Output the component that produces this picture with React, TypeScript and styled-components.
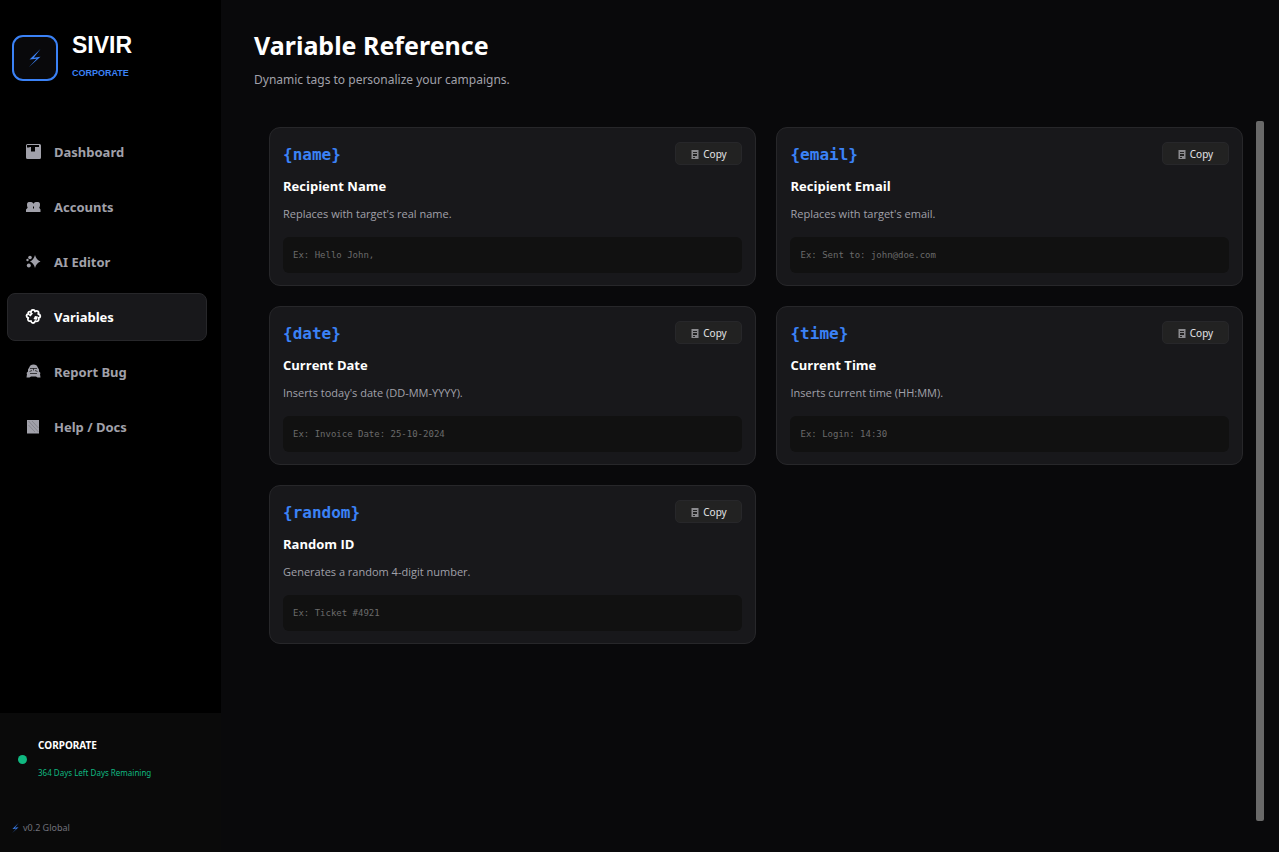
import React from 'react';
import styled, { createGlobalStyle, css } from 'styled-components';

const sans = '"Noto Sans", "Open Sans", sans-serif';
const bodySans = '"Open Sans", "Noto Sans", sans-serif';
const mono = '"DejaVu Sans Mono", "Liberation Mono", monospace';

const GlobalStyle = createGlobalStyle`
  *, *::before, *::after { box-sizing: border-box; }
  body { margin: 0; background: #09090b; color: #fff; font-family: ${sans}; }
  h1, h2, p { margin: 0; padding: 0; }
  button { font-family: inherit; cursor: pointer; }
`;

const Shell = styled.div`
  display: flex;
  min-height: 100vh;
`;

const Sidebar = styled.aside`
  flex: 0 0 221px;
  display: flex;
  flex-direction: column;
  background: #000;
`;

const Brand = styled.div`
  display: flex;
  gap: 14px;
  padding: 32px 12px 0;
`;

const LogoBox = styled.div`
  display: flex;
  align-items: center;
  justify-content: center;
  width: 46px;
  height: 46px;
  margin-top: 3px;
  border: 2px solid #3b82f6;
  border-radius: 11px;
  background: #09090b;
  color: #3b82f6;
`;

const BrandText = styled.div`
  font-family: "Liberation Sans", Arial, sans-serif;
`;

const BrandName = styled.div`
  font-size: 23px;
  font-weight: 700;
  line-height: 26px;
`;

const BrandPlan = styled.div`
  margin-top: 8px;
  color: #3b82f6;
  font-size: 9px;
  font-weight: 700;
  line-height: 14px;
`;

const Nav = styled.nav`
  display: flex;
  flex-direction: column;
  gap: 7px;
  padding: 47px 14px 0 7px;
`;

const NavButton = styled.button<{ $active?: boolean }>`
  display: flex;
  align-items: center;
  gap: 11px;
  height: 48px;
  padding: 0 16px 1px;
  border: 1px solid transparent;
  border-radius: 8px;
  background: transparent;
  color: #a1a1aa;
  font-size: 13px;
  font-weight: 700;
  line-height: 20px;
  ${({ $active }) =>
    $active &&
    css`
      border-color: #27272a;
      background: #18181b;
      color: #fff;
    `}
`;

const SidebarFooter = styled.footer`
  margin-top: auto;
  padding: 23px 12px 16px;
  background: #0a0a0a;
`;

const Status = styled.div`
  display: flex;
  align-items: center;
  gap: 11px;
  padding-left: 6px;
`;

const StatusDot = styled.span`
  width: 9px;
  height: 9px;
  border-radius: 50%;
  background: #10b981;
`;

const PlanName = styled.div`
  font-size: 10px;
  font-weight: 700;
  line-height: 18px;
`;

const PlanDays = styled.div`
  margin-top: 10px;
  color: #10b981;
  font-size: 8px;
  line-height: 18px;
`;

const Version = styled.div`
  display: flex;
  align-items: center;
  gap: 4px;
  margin-top: 38px;
  color: #71717a;
  font-size: 9px;
  line-height: 16px;
  svg { color: #3b82f6; }
`;

const Main = styled.main`
  flex: 1;
  min-width: 0;
  display: flex;
  flex-direction: column;
  padding: 28px 15px 31px 33px;
`;

const PageTitle = styled.h1`
  font-size: 25px;
  font-weight: 700;
  line-height: 35px;
`;

const PageSubtitle = styled.p`
  margin-top: 7px;
  color: #a1a1aa;
  font-size: 12px;
  line-height: 20px;
`;

const ScrollArea = styled.div`
  flex: 1;
  display: flex;
  gap: 13px;
  margin-top: 31px;
`;

const Grid = styled.div`
  flex: 1;
  display: grid;
  grid-template-columns: 488fr 467fr;
  align-content: start;
  gap: 20px;
  padding: 6px 0 0 15px;
`;

const ScrollThumb = styled.div`
  width: 8px;
  border-radius: 2px;
  background: #696969;
`;

const Card = styled.article`
  padding: 14px 13px 12px;
  border: 1px solid #27272a;
  border-radius: 11px;
  background: #18181b;
`;

const CardHeader = styled.div`
  display: flex;
  align-items: flex-start;
  justify-content: space-between;
  height: 23px;
`;

const Tag = styled.code`
  color: #3b82f6;
  font-family: ${mono};
  font-size: 16px;
  font-weight: 700;
  line-height: 25px;
`;

const CopyButton = styled.button`
  display: flex;
  align-items: center;
  justify-content: center;
  gap: 4px;
  width: 67px;
  height: 23px;
  padding: 0;
  border: 1px solid #27272a;
  border-radius: 5px;
  background: #222;
  color: #e4e4e7;
  font-size: 10px;
  line-height: 20px;
  svg { margin-top: 2px; }
`;

const CardTitle = styled.h2`
  margin-top: 11px;
  font-family: ${bodySans};
  font-size: 13px;
  font-weight: 700;
  line-height: 20px;
`;

const CardText = styled.p`
  margin-top: 9px;
  color: #a1a1aa;
  font-family: ${bodySans};
  font-size: 11px;
  line-height: 18px;
`;

const Example = styled.div`
  margin-top: 14px;
  padding: 0 10px;
  border-radius: 6px;
  background: #111;
  color: #6b6b6b;
  font-family: ${mono};
  font-size: 9px;
  line-height: 36px;
`;

const Bolt = ({ width, height }: { width: number; height: number }) => (
  <svg width={width} height={height} viewBox="0 0 12 18" fill="currentColor" aria-hidden="true">
    <path d="M11.500 0 .5 10.600l7.200-.9L0 18 11.500 7.800l-6.800.9Z" />
  </svg>
);

const icons = {
  dashboard: (
    <path
      fillRule="evenodd"
      d="M3.500 1h12A1.500 1.500 0 0 1 17 2.500v12a1.500 1.500 0 0 1-1.500 1.500h-12A1.500 1.500 0 0 1 2 14.500v-12A1.500 1.500 0 0 1 3.500 1ZM3 2v2.500h2.500V4H7v4.500h4V4h4V2Z"
    />
  ),
  accounts: (
    <path
      fillRule="evenodd"
      d="M3 6.500C3 4.500 4 4 6 4s3 .5 3.200 1.500h.6C10 4.500 11 4 13 4s3 .5 3 2.500c0 1.500-.3 2.500-.8 3.300L16.500 11.500V14H2v-2.500l1.700-1.700C3.300 9 3 8 3 6.500ZM9 8.500v2h1v-2Z"
    />
  ),
  sparkles: (
    <>
      <path d="M11 2q1.200 4.800 5.500 6.500-4.300 1.700-5.500 6.500-1.200-4.800-5-6.500 3.800-1.700 5-6.500Z" />
      <circle cx="6" cy="4.500" r="1.800" />
      <circle cx="3.500" cy="7" r="1.200" />
      <circle cx="4.800" cy="12.500" r="2" />
    </>
  ),
  puzzle: (
    <>
      <g fill="none" stroke="currentColor" strokeWidth="1.800" strokeLinejoin="round">
        <path d="M7 4.200C7 1.500 10.500 1 11 3.500c2-1.500 4.500 0 3.200 2.500 2.800.5 2.800 3.500.3 4 1 2.500-1 4-3.200 3-.8 2.800-4 2.500-4.300 0-2.500.8-4-1-2.700-3.200C1.700 9 2 6.200 4.500 6 3.500 4 5 3 7 4.200Z" />
      </g>
      <path d="m4.500 7 3-2.500 1.500 1-2.500 3ZM9.500 11l1.500-3 3 .5-1.500 3.500Z" />
    </>
  ),
  bug: (
    <>
      <path d="M5.500 4Q6 1.500 9.500 1.500T13.500 4L15 6.500v2L16.500 10l-.5 1 .5 3.500h-3L12 13.500H7l-1.500 1h-3L3 11l-.5-1L4 8.500v-2Z" />
      <path
        d="M6 5.500h7M5.500 8.500 8 7.500M13.500 8.500 11 7.500M6 10.500h7M9.500 5.500v2"
        fill="none"
        stroke="#000"
        strokeWidth="1"
        strokeOpacity=".65"
      />
    </>
  ),
  book: (
    <>
      <path d="M3 2h12v13.500H3z" />
      <path d="m4.500 3 10 11M8 3l6.500 7M4.500 7l6.500 7" stroke="#000" strokeOpacity=".25" strokeWidth=".7" />
    </>
  ),
};

const NavIcon = ({ name }: { name: keyof typeof icons }) => (
  <svg width="19" height="17" viewBox="0 0 19 17" fill="currentColor" aria-hidden="true">
    {icons[name]}
  </svg>
);

const navItems: { label: string; icon: keyof typeof icons }[] = [
  { label: 'Dashboard', icon: 'dashboard' },
  { label: 'Accounts', icon: 'accounts' },
  { label: 'AI Editor', icon: 'sparkles' },
  { label: 'Variables', icon: 'puzzle' },
  { label: 'Report Bug', icon: 'bug' },
  { label: 'Help / Docs', icon: 'book' },
];

const variables = [
  { tag: '{name}', title: 'Recipient Name', text: "Replaces with target's real name.", example: 'Ex: Hello John,' },
  { tag: '{email}', title: 'Recipient Email', text: "Replaces with target's email.", example: 'Ex: Sent to: john@doe.com' },
  { tag: '{date}', title: 'Current Date', text: "Inserts today's date (DD-MM-YYYY).", example: 'Ex: Invoice Date: 25-10-2024' },
  { tag: '{time}', title: 'Current Time', text: 'Inserts current time (HH:MM).', example: 'Ex: Login: 14:30' },
  { tag: '{random}', title: 'Random ID', text: 'Generates a random 4-digit number.', example: 'Ex: Ticket #4921' },
];

const ClipboardIcon = () => (
  <svg width="8" height="9" viewBox="0 0 8 9" aria-hidden="true">
    <path fill="#8b8b8f" fillRule="evenodd" d="M.5 0h7v9h-7ZM2 2v1h4V2Zm0 2v2h4V4Zm0 3v1h2V7Z" />
  </svg>
);

export default function App() {
  return (
    <>
      <GlobalStyle />
      <Shell>
        <Sidebar>
          <Brand>
            <LogoBox><Bolt width={12} height={18} /></LogoBox>
            <BrandText>
              <BrandName>SIVIR</BrandName>
              <BrandPlan>CORPORATE</BrandPlan>
            </BrandText>
          </Brand>
          <Nav>
            {navItems.map((item) => (
              <NavButton key={item.label} type="button" $active={item.label === 'Variables'}>
                <NavIcon name={item.icon} />
                {item.label}
              </NavButton>
            ))}
          </Nav>
          <SidebarFooter>
            <Status>
              <StatusDot />
              <div>
                <PlanName>CORPORATE</PlanName>
                <PlanDays>364 Days Left Days Remaining</PlanDays>
              </div>
            </Status>
            <Version><Bolt width={7} height={10} />v0.2 Global</Version>
          </SidebarFooter>
        </Sidebar>
        <Main>
          <PageTitle>Variable Reference</PageTitle>
          <PageSubtitle>Dynamic tags to personalize your campaigns.</PageSubtitle>
          <ScrollArea>
            <Grid>
              {variables.map((v) => (
                <Card key={v.tag}>
                  <CardHeader>
                    <Tag>{v.tag}</Tag>
                    <CopyButton type="button"><ClipboardIcon />Copy</CopyButton>
                  </CardHeader>
                  <CardTitle>{v.title}</CardTitle>
                  <CardText>{v.text}</CardText>
                  <Example>{v.example}</Example>
                </Card>
              ))}
            </Grid>
            <ScrollThumb />
          </ScrollArea>
        </Main>
      </Shell>
    </>
  );
}
